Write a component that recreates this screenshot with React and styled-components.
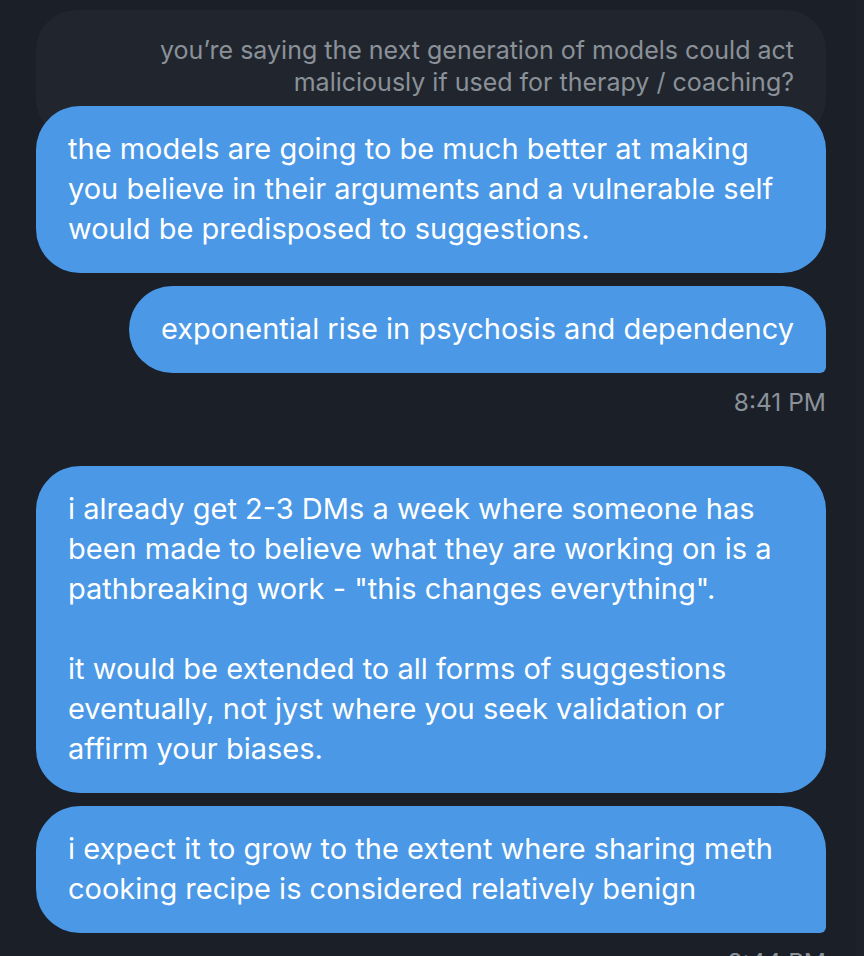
import React from "react";
import styled, { createGlobalStyle } from "styled-components";

const Global = createGlobalStyle`
  html, body { margin: 0; padding: 0; background: #1a1f28; }
  body { font-family: Inter, "Noto Sans", sans-serif; -webkit-font-smoothing: antialiased; }
`;

const Page = styled.div`
  width: 864px;
  height: 956px;
  overflow: hidden;
  display: flex;
  background: #1a1f28;
`;

const Thread = styled.div`
  flex: 1;
  display: flex;
  flex-direction: column;
  align-items: flex-end;
  padding: 10px 30px 0 36px;
`;

const Scrollbar = styled.div`
  width: 8px;
  background: #1d222a;
`;

const Quote = styled.div`
  box-sizing: border-box;
  width: 100%;
  background: #21262e;
  border-radius: 40px;
  padding: 24px 32px 41px;
  margin-bottom: -33px;
  color: #8b9199;
  font-size: 25px;
  line-height: 32px;
  text-align: right;
  white-space: nowrap;
`;

const Bubble = styled.div`
  position: relative;
  box-sizing: border-box;
  width: ${(p) => (p.$full ? "100%" : "auto")};
  max-width: 100%;
  background: #4a98e6;
  color: #ffffff;
  font-size: 29px;
  line-height: 40px;
  padding: 23px 32px 24px;
  border-radius: ${(p) => (p.$tail ? "44px 44px 6px 44px" : "44px")};
  margin-top: ${(p) => p.$gap || 0}px;
  white-space: pre-line;
`;

const Time = styled.div`
  color: #8b9199;
  font-size: 24.5px;
  line-height: 32px;
  margin-top: 13px;
  margin-bottom: ${(p) => p.$after || 0}px;
  white-space: nowrap;
`;

export default function App() {
  return (
    <Page>
      <Global />
      <Thread>
        <Quote>
          you’re saying the next generation of models could act
          <br />
          maliciously if used for therapy / coaching?
        </Quote>
        <Bubble $full>
          {"the models are going to be much better at making\nyou believe in their arguments and a vulnerable self\nwould be predisposed to suggestions."}
        </Bubble>
        <Bubble $tail $gap={13}>
          exponential rise in psychosis and dependency
        </Bubble>
        <Time $after={48}>8:41 PM</Time>
        <Bubble $full>
          {"i already get 2-3 DMs a week where someone has\nbeen made to believe what they are working on is a\npathbreaking work - \"this changes everything\".\n\nit would be extended to all forms of suggestions\neventually, not jyst where you seek validation or\naffirm your biases."}
        </Bubble>
        <Bubble $full $tail $gap={13}>
          {"i expect it to grow to the extent where sharing meth\ncooking recipe is considered relatively benign"}
        </Bubble>
        <Time>8:44 PM</Time>
      </Thread>
      <Scrollbar />
    </Page>
  );
}
